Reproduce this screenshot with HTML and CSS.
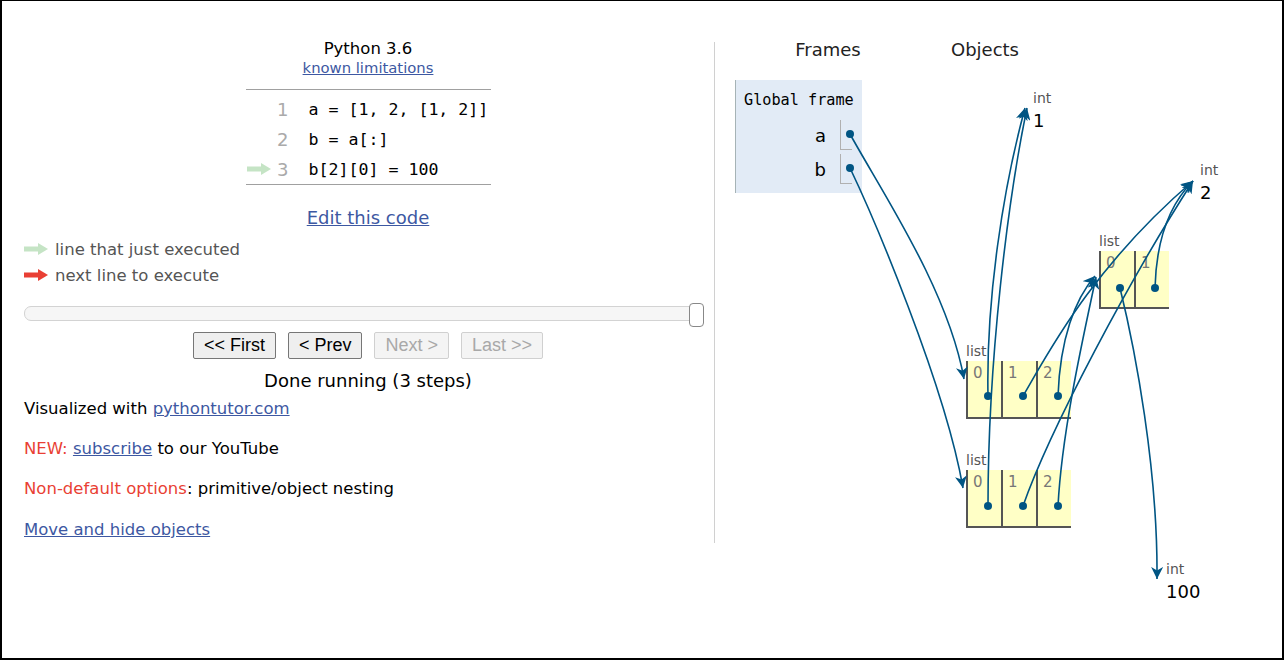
FILE: index.html
```html
<!DOCTYPE html>
<html>
<head>
<meta charset="utf-8">
<link rel="stylesheet" href="styles.css">
</head>
<body>
<div class="page">
  <div class="left">
    <div class="lang">Python 3.6</div>
    <div class="limits"><a href="#">known limitations</a></div>
    <div class="code">
      <div class="line"><span class="gut"></span><span class="num">1</span><span class="src">a = [1, 2, [1, 2]]</span></div>
      <div class="line"><span class="gut"></span><span class="num">2</span><span class="src">b = a[:]</span></div>
      <div class="line"><span class="gut"><svg class="arr" width="24" height="12" viewBox="0 0 24 12"><rect x="0" y="3.5" width="15" height="5" fill="#c5e4c5"/><polygon points="14,0 24,6 14,12" fill="#c5e4c5"/></svg></span><span class="num">3</span><span class="src">b[2][0] = 100</span></div>
    </div>
    <div class="edit"><a href="#">Edit this code</a></div>
    <div class="legend">
      <div class="leg"><svg class="arr" width="24" height="12" viewBox="0 0 24 12"><rect x="0" y="3.5" width="15" height="5" fill="#c5e4c5"/><polygon points="14,0 24,6 14,12" fill="#c5e4c5"/></svg><span>line that just executed</span></div>
      <div class="leg"><svg class="arr" width="24" height="12" viewBox="0 0 24 12"><rect x="0" y="3.5" width="15" height="5" fill="#e93f34"/><polygon points="14,0 24,6 14,12" fill="#e93f34"/></svg><span>next line to execute</span></div>
    </div>
    <div class="slider"><div class="track"></div><div class="handle"></div></div>
    <div class="buttons">
      <button class="btn">&lt;&lt; First</button>
      <button class="btn">&lt; Prev</button>
      <button class="btn off">Next &gt;</button>
      <button class="btn off">Last &gt;&gt;</button>
    </div>
    <div class="done">Done running (3 steps)</div>
    <p class="info">Visualized with <a href="#">pythontutor.com</a></p>
    <p class="info"><span class="red">NEW:</span> <a href="#">subscribe</a> to our YouTube</p>
    <p class="info"><span class="red">Non-default options</span>: primitive/object nesting</p>
    <p class="info"><a href="#">Move and hide objects</a></p>
  </div>
  <div class="divider"></div>
  <div class="right">
    <div class="heads"><span class="h-frames">Frames</span><span class="h-objects">Objects</span></div>
    <div class="frame">
      <div class="fname">Global frame</div>
      <div class="fvars">
        <div class="fvar"><span class="vname">a</span><span class="vptr"></span></div>
        <div class="fvar"><span class="vname">b</span><span class="vptr"></span></div>
      </div>
    </div>

    <div class="obj int1"><div class="olabel">int</div><div class="oval">1</div></div>
    <div class="obj int2"><div class="olabel">int</div><div class="oval">2</div></div>
    <div class="obj int100"><div class="olabel">int</div><div class="oval">100</div></div>

    <div class="obj inner"><div class="olabel">list</div>
      <div class="cells"><div class="cell">0</div><div class="cell">1</div></div>
    </div>
    <div class="obj lista"><div class="olabel">list</div>
      <div class="cells"><div class="cell">0</div><div class="cell">1</div><div class="cell">2</div></div>
    </div>
    <div class="obj listb"><div class="olabel">list</div>
      <div class="cells"><div class="cell">0</div><div class="cell">1</div><div class="cell">2</div></div>
    </div>

    <svg class="wires" width="567" height="656" viewBox="715 2 567 656">
      <defs>
        <marker id="ah" markerUnits="userSpaceOnUse" markerWidth="13" markerHeight="12" refX="12" refY="6" orient="auto">
          <path d="M0,0 L12,6 L0,12 L3.5,6 Z" fill="#005583"/>
        </marker>
      </defs>
      <g fill="none" stroke="#005583" stroke-width="1.6" marker-end="url(#ah)">
        <path d="M850,135 C880,190 948,290 964,380"/>
        <path d="M850,169 C872,215 945,385 963,489"/>
        <path d="M988,397 C986,300 1003,190 1025,109"/>
        <path d="M988,507 C988,360 1008,200 1027,109"/>
        <path d="M1023,397 C1045,360 1090,270 1193,182"/>
        <path d="M1023,507 C1050,430 1130,280 1193,182"/>
        <path d="M1058,397 C1060,340 1075,300 1095,277"/>
        <path d="M1058,507 C1062,430 1085,330 1096,278"/>
        <path d="M1155,289 C1156,250 1165,210 1193,182"/>
        <path d="M1120,289 C1135,350 1158,470 1157,580"/>
      </g>
      <g fill="#005583">
        <circle cx="850" cy="135" r="4"/>
        <circle cx="850" cy="169" r="4"/>
        <circle cx="988" cy="397" r="4"/>
        <circle cx="1023" cy="397" r="4"/>
        <circle cx="1058" cy="397" r="4"/>
        <circle cx="988" cy="507" r="4"/>
        <circle cx="1023" cy="507" r="4"/>
        <circle cx="1058" cy="507" r="4"/>
        <circle cx="1120" cy="289" r="4"/>
        <circle cx="1155" cy="289" r="4"/>
      </g>
    </svg>
  </div>
</div>
</body>
</html>
```
FILE: styles.css
```css
html, body {
  margin: 0;
  padding: 0;
  background: #fff;
}
body {
  font-family: "DejaVu Sans", Verdana, sans-serif;
  color: #000;
}
a {
  color: #3d58a2;
  text-decoration: underline;
}
.page {
  box-sizing: border-box;
  width: 1284px;
  height: 660px;
  border: 2px solid #000;
  border-top-width: 1px;
  display: flex;
  overflow: hidden;
}

/* ---------- left ---------- */
.left {
  flex-shrink: 0;
  width: 688px;
  padding-left: 22px;
  padding-top: 38px;
  display: flex;
  flex-direction: column;
}
.lang {
  text-align: center;
  font-size: 16.5px;
  line-height: 20px;
}
.limits {
  text-align: center;
  font-size: 14.8px;
  line-height: 18px;
}
.code {
  align-self: center;
  width: 245px;
  margin-top: 12px;
  padding-top: 4px;
  border-top: 1px solid #a0a0a0;
  border-bottom: 1px solid #a0a0a0;
}
.line {
  display: flex;
  align-items: center;
  height: 30px;
}
.gut {
  width: 27px;
  display: flex;
  align-items: center;
  padding-left: 1px;
  box-sizing: border-box;
}
.num {
  width: 16px;
  text-align: right;
  color: #aaa;
  font-family: "DejaVu Sans", sans-serif;
  font-size: 18px;
}
.src {
  padding-left: 20px;
  font-family: "DejaVu Sans Mono", "Liberation Mono", monospace;
  font-size: 16.6px;
  white-space: pre;
}
.arr {
  display: block;
}
.edit {
  text-align: center;
  margin-top: 22px;
  font-size: 18px;
  line-height: 22px;
}
.legend {
  margin-top: 7px;
}
.leg {
  display: flex;
  align-items: center;
  height: 26px;
  color: #555;
  font-size: 16.5px;
}
.leg span {
  margin-left: 7px;
}
.slider {
  margin-top: 15px;
  display: flex;
  align-items: flex-start;
  width: 680px;
  height: 24px;
}
.track {
  flex: 1;
  height: 15px;
  margin-top: 3px;
  box-sizing: border-box;
  border: 1px solid #d3d3d3;
  border-radius: 7px;
  background: #f6f6f6;
}
.handle {
  width: 15px;
  height: 24px;
  margin-left: -15px;
  box-sizing: border-box;
  border: 1px solid #888;
  border-radius: 4px;
  background: #fff;
}
.buttons {
  margin-top: 5px;
  display: flex;
  justify-content: center;
  gap: 12px;
}
.btn {
  font-family: "Liberation Sans", Arial, sans-serif;
  font-size: 18px;
  line-height: 21px;
  padding: 2px 10px 2px 10px;
  border: 1px solid #767676;
  border-radius: 2px;
  background: #efefef;
  color: #000;
  margin: 0;
}
.btn.off {
  border-color: #d0d0d0;
  background: #f4f4f4;
  color: #a8a8a8;
}
.done {
  margin-top: 11px;
  text-align: center;
  font-size: 18px;
  line-height: 22px;
}
.info {
  margin: 6px 0 12px 0;
  font-size: 16.5px;
  line-height: 22px;
}
.info + .info {
  margin-top: 6px;
}
.info:last-child {
  margin-top: 7px;
}
.red {
  color: #e93f34;
}

/* ---------- divider ---------- */
.divider {
  flex-shrink: 0;
  width: 1px;
  margin-left: 2px;
  margin-top: 41px;
  height: 501px;
  background: #d0d0d0;
}

/* ---------- right ---------- */
.right {
  flex: 1;
  position: relative;
}
.heads {
  display: flex;
  padding-top: 38px;
  font-size: 18px;
  line-height: 22px;
  color: #222;
}
.h-frames {
  margin-left: 20px;
  width: 186px;
  text-align: center;
}
.h-objects {
  width: 128px;
  text-align: center;
}
.frame {
  margin-top: 19px;
  margin-left: 20px;
  width: 127px;
  height: 113px;
  box-sizing: border-box;
  background: #e2ebf6;
  border-left: 1px solid #a6b3b6;
  padding-top: 11px;
}
.fname {
  padding-left: 8px;
  font-family: "DejaVu Sans Mono", "Liberation Mono", monospace;
  font-size: 15.2px;
  line-height: 18px;
}
.fvars {
  margin-top: 11px;
  display: flex;
  flex-direction: column;
  gap: 4px;
}
.fvar {
  display: flex;
  justify-content: flex-end;
  height: 30px;
  padding-right: 10px;
}
.vname {
  font-size: 18px;
  line-height: 31px;
  margin-right: 14px;
}
.vptr {
  width: 12px;
  height: 30px;
  box-sizing: border-box;
  border-left: 1px solid #b0b0b0;
  border-bottom: 1px solid #b0b0b0;
}

.obj {
  position: absolute;
}
.olabel {
  font-size: 14px;
  line-height: 20px;
  color: #555;
}
.oval {
  font-size: 18px;
  line-height: 22px;
  margin-top: 2px;
  color: #000;
}
.int1 { left: 318px; top: 87px; }
.int2 { left: 485px; top: 159px; }
.int100 { left: 451px; top: 558px; }
.inner { left: 384px; top: 230px; }
.lista { left: 251px; top: 340px; }
.listb { left: 251px; top: 449px; }

.cells {
  display: flex;
}
.cell {
  width: 35px;
  height: 58px;
  box-sizing: border-box;
  background: #ffffc6;
  border-left: 2px solid #555;
  border-bottom: 2px solid #555;
  padding: 3px 0 0 5px;
  font-size: 15px;
  line-height: 18px;
  color: #777;
}

.wires {
  position: absolute;
  left: 0;
  top: 0;
  pointer-events: none;
}
```
